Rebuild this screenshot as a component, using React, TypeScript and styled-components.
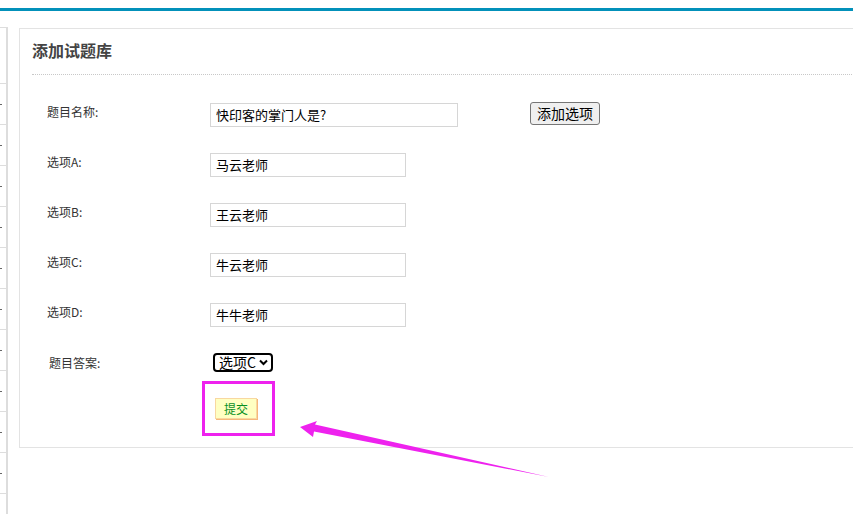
import React from 'react';
import styled, { createGlobalStyle } from 'styled-components';

const GlobalStyle = createGlobalStyle`
  html, body {
    margin: 0;
    padding: 0;
    background: #fff;
    overflow: hidden;
  }
  body {
    font-family: "Noto Sans CJK SC", "DejaVu Sans", sans-serif;
    color: #333;
  }
`;

const Page = styled.div`
  position: relative;
  width: 853px;
  height: 514px;
  overflow: hidden;
`;

const TopBar = styled.div`
  height: 8px;
  border-bottom: 3px solid #0391ba;
`;

const Body = styled.div`
  display: flex;
  align-items: flex-start;
  margin-top: 16px;
`;

const Sidebar = styled.ul`
  list-style: none;
  margin: 0;
  padding: 0;
  width: 6px;
  flex-shrink: 0;
  border-top: 1px solid #ddd;
  border-right: 2px solid #ddd;
  height: 600px;
`;

const SideItem = styled.li<{ $first?: boolean }>`
  height: ${(p) => (p.$first ? 55 : 40)}px;
  border-bottom: 1px solid #ddd;
  position: relative;

  &::before {
    content: '';
    display: ${(p) => (p.$first ? 'none' : 'block')};
    position: absolute;
    left: 0;
    top: 20px;
    width: 2px;
    height: 1px;
    background: #666;
  }
`;

const Panel = styled.section`
  margin-left: 11px;
  margin-top: 1px;
  width: 900px;
  flex-shrink: 0;
  border: 1px solid #e3e3e3;
`;

const Header = styled.h2`
  margin: 0 0 0 12px;
  padding: 9px 0 12px;
  font-size: 16px;
  line-height: 24px;
  font-weight: bold;
  color: #444;
  border-bottom: 1px dotted #c8c8c8;
`;

const Form = styled.form`
  display: flex;
  flex-direction: column;
  gap: 26px;
  padding: 28px 0 28px 27px;
`;

const Row = styled.div<{ $center?: boolean }>`
  display: flex;
  align-items: ${(p) => (p.$center ? 'center' : 'flex-start')};
`;

const Label = styled.label<{ $indent?: number }>`
  width: ${(p) => 163 - (p.$indent || 0)}px;
  padding-left: ${(p) => p.$indent || 0}px;
  padding-top: 1px;
  font-size: 12px;
  line-height: 16px;
  color: #333;
  flex-shrink: 0;
`;

const TextInput = styled.input<{ $wide?: boolean }>`
  box-sizing: border-box;
  width: ${(p) => (p.$wide ? 248 : 196)}px;
  height: 24px;
  padding: 0 5px 1px;
  border: 1px solid #d6d6d6;
  font-family: "Noto Sans CJK SC", sans-serif;
  font-size: 13px;
  color: #000;
  outline: none;
`;

const AddButton = styled.button`
  margin-left: 72px;
  margin-top: -1px;
  height: 23px;
  padding: 0 6px;
  font-family: "Noto Sans CJK SC", sans-serif;
  font-size: 14px;
  line-height: 19px;
  color: #000;
  background: #efefef;
  border: 1px solid #767676;
  border-radius: 3px;
`;

const SelectWrap = styled.div`
  position: relative;
  margin-left: 3px;
  display: flex;
`;

const Select = styled.select`
  appearance: none;
  box-sizing: border-box;
  width: 60px;
  padding: 0 0 0 4px;
  font-family: "Noto Sans CJK SC", sans-serif;
  font-size: 14px;
  line-height: 15px;
  color: #000;
  background: #fff;
  border: 2px solid #000;
  border-radius: 4px;
  outline: none;
`;

const Chevron = styled.svg`
  position: absolute;
  right: 5px;
  top: 6px;
  pointer-events: none;
`;

const SubmitWrap = styled.div`
  position: relative;
  margin-left: 5px;
`;

const SubmitButton = styled.button`
  display: block;
  width: 42px;
  height: 21px;
  padding: 0;
  font-family: "Noto Sans CJK SC", sans-serif;
  font-size: 12px;
  color: #07901f;
  background: #ffffc2;
  border: 1px solid #f8d8a0;
  box-shadow: 1px 1px 0 #f6b77a;
`;

const Highlight = styled.div`
  position: absolute;
  left: -13px;
  top: -17px;
  width: 67px;
  height: 49px;
  border: 3px solid #ee22ee;
  pointer-events: none;
`;

const Arrow = styled.svg`
  position: absolute;
  left: 0;
  top: 0;
  pointer-events: none;
`;

const sideRows = Array.from({ length: 12 }, (_, i) => i);

const options = [
  { key: 'A', value: '马云老师' },
  { key: 'B', value: '王云老师' },
  { key: 'C', value: '牛云老师' },
  { key: 'D', value: '牛牛老师' },
];

export default function App() {
  return (
    <Page>
      <GlobalStyle />
      <TopBar />
      <Body>
        <Sidebar>
          {sideRows.map((i) => (
            <SideItem key={i} $first={i === 0} />
          ))}
        </Sidebar>
        <Panel>
          <Header>添加试题库</Header>
          <Form onSubmit={(e) => e.preventDefault()}>
            <Row>
              <Label>题目名称:</Label>
              <TextInput $wide defaultValue="快印客的掌门人是?" />
              <AddButton type="button">添加选项</AddButton>
            </Row>
            {options.map((o) => (
              <Row key={o.key}>
                <Label>选项{o.key}:</Label>
                <TextInput defaultValue={o.value} />
              </Row>
            ))}
            <Row $center>
              <Label $indent={2}>题目答案:</Label>
              <SelectWrap>
                <Select defaultValue="C">
                  <option value="A">选项A</option>
                  <option value="B">选项B</option>
                  <option value="C">选项C</option>
                  <option value="D">选项D</option>
                </Select>
                <Chevron width="9" height="7" viewBox="0 0 9 7">
                  <path d="M1 1.5 L4.5 5 L8 1.5" fill="none" stroke="#000" strokeWidth="2" />
                </Chevron>
              </SelectWrap>
            </Row>
            <Row>
              <Label />
              <SubmitWrap>
                <SubmitButton type="submit">提交</SubmitButton>
                <Highlight />
              </SubmitWrap>
            </Row>
          </Form>
        </Panel>
      </Body>
      <Arrow width="853" height="514" viewBox="0 0 853 514">
        <polygon
          points="300,427 317,421 315,424.5 549,477 314,431.5 313,437"
          fill="#ee22ee"
        />
      </Arrow>
    </Page>
  );
}
